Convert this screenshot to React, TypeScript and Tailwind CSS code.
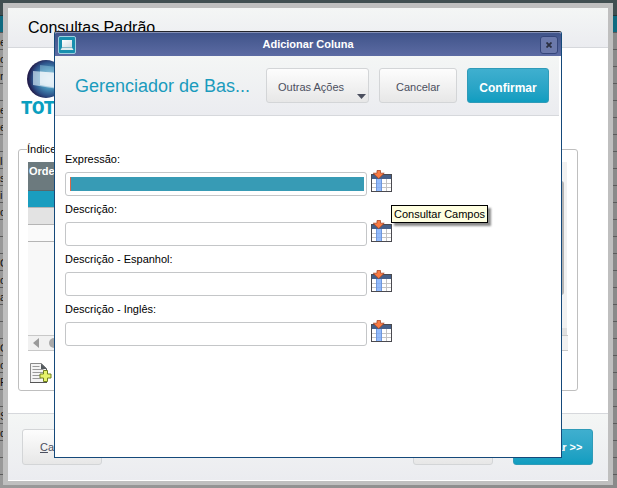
import React from "react";
import clsx from "clsx";

type Field = {
    id: string;
    label: string;
    selected?: boolean;
    tooltip?: string;
};

const fields: Field[] = [
    { id: "expressao", label: "Expressão:", selected: true, tooltip: "Consultar Campos" },
    { id: "descricao", label: "Descrição:" },
    { id: "descricao-es", label: "Descrição - Espanhol:" },
    { id: "descricao-en", label: "Descrição - Inglês:" },
];

const backgroundRows = [
    "e", "c", "r", "", "e", "e", "", "li", "s", "i", "o", "", "",
    "C", "o", "a", "", "", "G", "c", "P", "", "S", "d", "", "", "",
];

function LookupIcon() {
    return (
        <svg viewBox="0 0 22 23" className="h-[23px] w-[22px]" aria-hidden="true">
            <rect x="0.5" y="4.5" width="20" height="17" fill="#fff" stroke="#4a4a50" />
            <rect x="1" y="5" width="19" height="4" fill="#466089" />
            <rect x="5" y="9" width="6" height="12" fill="#93bbfb" />
            <path d="M5.5 9v12M10.5 9v12" stroke="#6f97dc" />
            <path d="M15.5 9v12M1 13.5h4M1 17.5h4M11 13.5h9M11 17.5h9" stroke="#c3c3c3" />
            <path d="M6 13.5h4M6 17.5h4" stroke="#86aef0" />
            <path
                d="M6 0.5h3.500v2.700h3.700L7.750 8.600 2.300 3.200H6z"
                fill="#fb7c42"
                stroke="#a8482a"
                strokeWidth="0.8"
            />
        </svg>
    );
}

function WindowIcon() {
    return (
        <svg viewBox="0 0 18 18" className="size-[18px] shrink-0" aria-hidden="true">
            <defs>
                <linearGradient id="screen-grad" x1="0" y1="0" x2="1" y2="1">
                    <stop offset="0%" stopColor="#ffffff" />
                    <stop offset="100%" stopColor="#d3dde2" />
                </linearGradient>
            </defs>
            <rect x="0.5" y="0.5" width="17" height="17" rx="1.5" fill="#178fae" stroke="#9fd0df" />
            <rect x="4" y="4" width="10" height="7" fill="url(#screen-grad)" />
            <path d="M4 11.500h10l1.500 2.500h-13z" fill="#e4ecee" />
            <path d="M4 11.500h10" stroke="#9fb9c2" strokeWidth="0.6" />
        </svg>
    );
}

function AddDocumentIcon() {
    return (
        <svg viewBox="0 0 22 22" className="size-[22px]" aria-hidden="true">
            <path d="M0.5 0.5h11l5 5v14h-16z" fill="#f4f4f4" stroke="#8a8a8a" />
            <path d="M0 19.5h17M16.5 6v13" stroke="#555" />
            <path d="M11 0.500l6 5.500h-6z" fill="#555b60" />
            <path d="M2.5 3.5h7M2.5 6.5h11M2.5 9.5h11M2.5 12.5h8M2.5 15.5h8" stroke="#9a9a9a" />
            <path
                d="M13.5 7.500h4v3.500h3.500v4h-3.500v3.500h-4v-3.500h-3.500v-4h3.500z"
                fill="#e6f36c"
                stroke="#70801f"
            />
        </svg>
    );
}

function Logo() {
    return (
        <div className="w-[62px]">
            <svg viewBox="0 0 40 40" className="ml-[5px] size-10" aria-hidden="true">
                <defs>
                    <radialGradient id="orb-grad" cx="0.6" cy="0.5" r="0.58">
                        <stop offset="0%" stopColor="#d5eaf5" />
                        <stop offset="45%" stopColor="#4690b8" />
                        <stop offset="78%" stopColor="#2c4f86" />
                        <stop offset="100%" stopColor="#211a48" />
                    </radialGradient>
                </defs>
                <circle cx="20" cy="20" r="19" fill="url(#orb-grad)" />
                <path d="M14 6l25 3v18l-25-3z" fill="#8fc3dc" fillOpacity="0.5" />
                <path d="M7 12l25 2v16L7 26z" fill="#cfe2f0" fillOpacity="0.7" />
                <path d="M14 12.500l18 1.500v15l-18-3z" fill="#fff" fillOpacity="0.6" />
            </svg>
            <div className="font-[Roboto,sans-serif] text-[18px] leading-[18px] font-black text-[#0a9fc0]">TOTVS</div>
        </div>
    );
}

function ActionButton({
    primary,
    className,
    children,
}: {
    primary?: boolean;
    className?: string;
    children: React.ReactNode;
}) {
    return (
        <button
            type="button"
            className={clsx(
                "shrink-0 rounded-[3px] border bg-linear-to-b",
                primary
                    ? "border-[#2f9bb8] from-[#3fafcf] to-[#0f9dc0] font-bold text-white"
                    : "border-[#d3d5d7] from-[#fdfdfd] to-[#e7e7e7] text-[#4b4f5e]",
                className
            )}
        >
            {children}
        </button>
    );
}

function BackgroundGrid() {
    return (
        <div className="absolute inset-0 overflow-hidden bg-[#8f8f8f]">
            <div className="h-4 border-b border-[#24363a] bg-[#414f51]" />
            <div className="h-[17px] border-b border-[#5a5a5a] bg-[#0f6a80]" />
            {backgroundRows.map((text, i) => (
                <div
                    key={i}
                    className="h-[17px] border-b border-[#5c5c5c] bg-linear-to-r from-[#999] to-[#8a8a8a] leading-[18px] text-[#111]"
                >
                    {text}
                </div>
            ))}
        </div>
    );
}

function IndexGrid() {
    return (
        <div>
            <div className="flex h-[173px]">
                <div className="flex-1 bg-[#f8f8f8]">
                    <table className="w-full border-collapse text-left">
                        <thead>
                            <tr className="h-7 border-b border-[#59676b] bg-[#6c7a7e] text-white">
                                <th className="pt-px pl-px align-top font-bold leading-4">Ordem</th>
                            </tr>
                        </thead>
                        <tbody>
                            <tr className="h-[17px] border-b border-[#b5b5b5] bg-[#1a9dbf]">
                                <td />
                            </tr>
                            <tr className="h-[17px] border-b border-[#b5b5b5] bg-[#e3e3e3]">
                                <td />
                            </tr>
                            <tr className="h-[17px] border-b border-[#b5b5b5] bg-[#fafafa]">
                                <td />
                            </tr>
                        </tbody>
                    </table>
                </div>
                <div className="mr-px flex w-4 flex-col bg-[#f1f1f1]">
                    <div className="mr-[3px] ml-1 mt-[19px] h-[114px] rounded-[3px] bg-[#b3b3b3]" />
                    <div className="mt-auto h-[7px] bg-[#e0e0e0]" />
                </div>
            </div>
            <div className="flex h-4 items-center gap-[10px] border-y border-[#c8c8c8] bg-[#f1f1f1] pl-[5px]">
                <svg viewBox="0 0 6 10" className="h-[10px] w-[6px]" aria-hidden="true">
                    <path d="M6 0v10L0 5z" fill="#9a9a9a" />
                </svg>
                <div className="h-[10px] w-[300px] rounded-full bg-[#a9a9a9]" />
            </div>
        </div>
    );
}

function Wizard() {
    return (
        <section className="absolute inset-[3px] right-1 flex flex-col border-[5px] border-b-4 border-[#bfbfbf] bg-white">
            <header className="flex h-10 shrink-0 items-center border-b border-[#d6d8dc] bg-linear-to-b from-[#f4f6f5] to-[#ebecf0] pl-5">
                <h1 className="text-base text-black">Consultas Padrão</h1>
            </header>
            <div className="min-h-0 flex-1 pr-[30px] pl-[10px]">
                <div className="h-[94px] pt-[11px] pl-[3px]">
                    <Logo />
                </div>
                <fieldset className="min-w-0 rounded-[3px] border border-[#bfbfbf] px-[9px] pb-[5px]">
                    <legend className="-ml-px h-[14px] leading-[14px]">Índices</legend>
                    <div className="pt-[6px]">
                        <IndexGrid />
                    </div>
                    <button type="button" aria-label="Adicionar" className="mt-3 ml-[2px] block">
                        <AddDocumentIcon />
                    </button>
                </fieldset>
            </div>
            <footer className="flex h-[68px] shrink-0 items-start gap-5 border-t border-b border-t-[#d6d8dc] border-b-white bg-linear-to-b from-[#f4f6f5] to-[#ebecf0] pt-[15px] pr-[15px] pl-[14px]">
                <ActionButton className="mr-auto h-9 w-20">
                    <u>C</u>ancelar
                </ActionButton>
                <ActionButton className="h-9 w-20">&lt;&lt; Voltar</ActionButton>
                <ActionButton primary className="h-9 w-20">
                    Avançar &gt;&gt;
                </ActionButton>
            </footer>
        </section>
    );
}

function FieldRow({ field }: { field: Field }) {
    return (
        <div>
            <label htmlFor={field.id} className="block h-[18px] w-fit leading-[14px] text-black">
                {field.label}
            </label>
            <div className="flex h-[26px] gap-1">
                <input
                    id={field.id}
                    type="text"
                    className={clsx(
                        "h-6 w-[302px] self-end rounded-[3px] border border-[#c4c6c8] py-1 pr-[2px] pl-1 outline-none",
                        field.selected &&
                            "bg-[linear-gradient(to_right,#d9694a_1px,#379bb5_1px)] bg-origin-content bg-clip-content"
                    )}
                />
                <div className="relative">
                    <button type="button" aria-label={`Consultar ${field.label}`} className="block">
                        <LookupIcon />
                    </button>
                    {field.tooltip && (
                        <div
                            role="tooltip"
                            className="absolute top-[35px] left-5 z-10 h-[18px] border border-black bg-[#ffffe1] px-[2px] leading-4 whitespace-nowrap text-black shadow-[3px_3px_2px_rgba(0,0,0,0.45)]"
                        >
                            {field.tooltip}
                        </div>
                    )}
                </div>
            </div>
        </div>
    );
}

function AddColumnDialog() {
    return (
        <div className="absolute inset-0 flex px-[54px] pt-[31px] pr-[55px] pb-[30px]">
            <section
                role="dialog"
                aria-labelledby="dialog-title"
                className="flex flex-1 flex-col rounded-t-[3px] border border-[#15497a] border-t-[#23252c] bg-white"
            >
                <header className="flex h-6 shrink-0 items-center justify-between rounded-t-[2px] border-t border-[#8590b5] bg-linear-to-b from-[#40548a] to-[#5c6ba3] px-[3px]">
                    <WindowIcon />
                    <h2 id="dialog-title" className="font-bold text-white">
                        Adicionar Coluna
                    </h2>
                    <button
                        type="button"
                        aria-label="Fechar"
                        className="flex size-[18px] items-center justify-center rounded-[3px] border border-[#34457a] bg-[#6b79ab]"
                    >
                        <svg viewBox="0 0 6 6" className="size-[6px]" aria-hidden="true">
                            <path d="M0.5 0.5l5 5M5.500 0.5l-5 5" stroke="#2a2e40" strokeWidth="1.8" />
                        </svg>
                    </button>
                </header>
                <div className="mr-[2px] flex h-[60px] shrink-0 items-center gap-[10px] border-b border-[#d6d8dc] bg-linear-to-b from-[#f4f6f5] to-[#ebecf0] pr-[10px] pl-5">
                    <h3 className="mr-auto text-lg whitespace-nowrap text-[#1a9bbd]">Gerenciador de Bas...</h3>
                    <ActionButton className="flex h-[35px] w-[103px] items-center justify-between pt-1 pr-[2px] pl-[11px]">
                        Outras Ações
                        <svg viewBox="0 0 9 5" className="mb-[3px] h-[5px] w-[9px] self-end" aria-hidden="true">
                            <path d="M0 0h9L4.500 5z" fill="#4b4f5e" />
                        </svg>
                    </ActionButton>
                    <ActionButton className="h-[35px] w-[78px] pt-1">Cancelar</ActionButton>
                    <ActionButton primary className="h-[35px] w-[82px] pt-1 text-xs">
                        Confirmar
                    </ActionButton>
                </div>
                <form className="flex flex-col gap-[6px] pt-9 pl-[10px]">
                    {fields.map((field) => (
                        <FieldRow key={field.id} field={field} />
                    ))}
                </form>
            </section>
        </div>
    );
}

export default function App() {
    return (
        <main className="relative h-screen overflow-hidden font-['Liberation_Sans',Arial,sans-serif] text-[11px]">
            <BackgroundGrid />
            <Wizard />
            <AddColumnDialog />
        </main>
    );
}
